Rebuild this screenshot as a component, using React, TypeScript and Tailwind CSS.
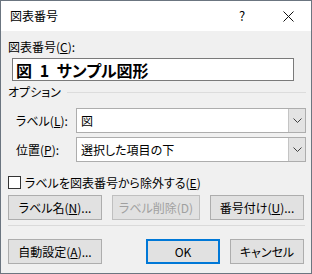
import React from 'react'

function Chevron() {
  return (
    <svg width="9" height="5" viewBox="0 0 9 5" className="block">
      <polyline points="0.5,0.5 4.5,4.5 8.5,0.5" fill="none" stroke="#404040" strokeWidth="1" />
    </svg>
  )
}

function Combo({ value }: { value: string }) {
  return (
    <div className="flex w-[230px] h-[25px] border border-[#adadad] bg-white">
      <div className="flex-1 flex items-center pl-[4px]">{value}</div>
      <div className="w-[17px] bg-[#e3e3e3] border-l border-[#c4c4c4] flex items-center justify-center">
        <Chevron />
      </div>
    </div>
  )
}

function Btn({ children, w, disabled, primary }: { children: React.ReactNode; w: string; disabled?: boolean; primary?: boolean }) {
  return (
    <div
      className={
        'h-[25px] flex items-center justify-center bg-[#e1e1e1] ' +
        w +
        (primary ? ' border-2 border-[#0078d7]' : disabled ? ' border border-[#bfbfbf] text-[#a0a0a0]' : ' border border-[#adadad]')
      }
    >
      {children}
    </div>
  )
}

export default function App() {
  return (
    <div className="w-[312px] h-[274px] flex flex-col border border-[#6b7580] bg-[#f0f0f0] text-[12px] leading-4 text-black font-['Noto_Sans_CJK_JP',sans-serif] [font-feature-settings:'palt']">
      {/* title bar */}
      <div className="h-[30px] shrink-0 flex items-center bg-white pl-[9px]">
        <span>図表番号</span>
        <span className="ml-auto w-[46px] text-center text-[13px]">?</span>
        <div className="w-[46px] flex justify-center">
          <svg width="11" height="11" viewBox="0 0 11 11" className="block">
            <path d="M0.5 0.5 L10.5 10.5 M10.5 0.5 L0.5 10.5" stroke="#111" strokeWidth="1" />
          </svg>
        </div>
      </div>

      {/* body */}
      <div className="flex-1 flex flex-col pl-[7px] pt-[8px]">
        <div>
          図表番号(<u>C</u>):
        </div>
        <div className="mt-[3px] ml-[4px] w-[282px] h-[23px] border border-[#7a7a7a] bg-white flex items-center pl-[3px] text-[16px] font-bold [word-spacing:4px]">
          図 1 サンプル図形
        </div>

        <div className="mt-[3px] h-4 flex items-center pr-[5px]">
          <span>オプション</span>
          <div className="flex-1 h-px bg-[#dcdcdc] ml-[6px]" />
        </div>

        <div className="mt-[8px] flex items-center pl-[8px]">
          <span className="w-[60px]">
            ラベル(<u>L</u>):
          </span>
          <Combo value="図" />
        </div>
        <div className="mt-[4px] flex items-center pl-[8px]">
          <span className="w-[60px]">
            位置(<u>P</u>):
          </span>
          <Combo value="選択した項目の下" />
        </div>

        <div className="mt-[14px] h-[13px] flex items-center">
          <div className="w-[13px] h-[13px] border border-[#333] bg-white" />
          <span className="ml-[4px]">
            ラベルを図表番号から除外する(<u>E</u>)
          </span>
        </div>

        <div className="mt-[6px] flex gap-[10px]">
          <Btn w="w-[94px]">
            ラベル名(<u>N</u>)...
          </Btn>
          <Btn w="w-[88px]" disabled>
            ラベル削除(D)
          </Btn>
          <Btn w="w-[94px]">
            番号付け(<u>U</u>)...
          </Btn>
        </div>

        <div className="mt-[5px] w-[297px] h-px bg-[#dadada]" />

        <div className="mt-[13px] flex">
          <Btn w="w-[94px]">
            自動設定(<u>A</u>)...
          </Btn>
          <div className="ml-[44px]">
            <Btn w="w-[74px]" primary>
              OK
            </Btn>
          </div>
          <div className="ml-[10px]">
            <Btn w="w-[74px]">キャンセル</Btn>
          </div>
        </div>
      </div>
    </div>
  )
}
